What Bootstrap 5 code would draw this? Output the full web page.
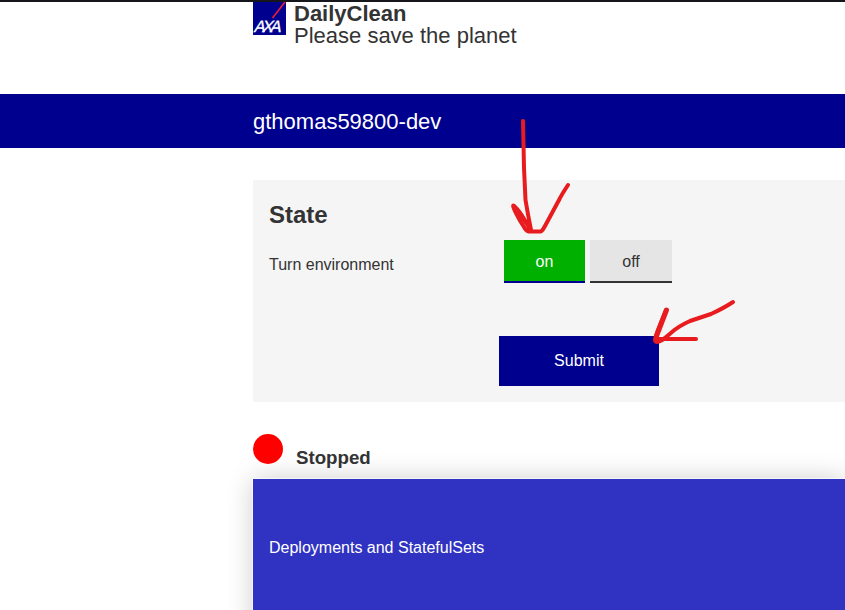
<!DOCTYPE html>
<html lang="en">
<head>
<meta charset="utf-8">
<meta name="viewport" content="width=device-width, initial-scale=1">
<title>DailyClean</title>
<link rel="stylesheet" href="https://cdn.jsdelivr.net/npm/bootstrap@5.3.0/dist/css/bootstrap.min.css">
<style>
body { font-family: "Liberation Sans", Arial, sans-serif; font-size: 16px; color: #333; height: 610px; }
.page-inset { padding-left: 253px; }
.site-header { height: 94px; border-top: 2px solid #15151c; }
.site-title { font-size: 22px; line-height: 22px; padding: 1px 0 0 8px; }
.env-bar { height: 54px; background: #00008f; font-size: 22px; }
.state-panel { height: 222px; margin-top: 32px; background: #f5f5f5; }
.state-title { font-size: 24px; line-height: 28px; padding-top: 5px; margin-bottom: 11px; }
.state-label { width: 235px; padding-top: 13px; }
.toggle-btn { height: 43px; border: 0; border-bottom: 2px solid #333; border-radius: 0; background: #e5e5e5; color: #333; padding: 2px 0 0; width: 82px; }
.toggle-btn.is-on { background: #00b000; border-color: #00008f; color: #fff; width: 81px; }
.toggle-group { gap: 5px; }
.submit-btn { width: 160px; height: 50px; margin: 53px 0 0 230px; background: #00008f; border: 0; border-radius: 0; color: #fff; }
.submit-btn:hover { background: #00006d; color: #fff; }
.status-row { height: 45px; margin-top: 32px; gap: 13px; }
.status-dot { width: 30px; height: 30px; background: red; }
.status-text { font-size: 18.7px; line-height: 22px; padding-top: 13px; }
.deploy-panel { height: 160px; background: #3032c1; box-shadow: 0 0 0 1px rgba(255,255,255,.6), 0 0 25px rgba(0,0,0,.2); padding: 57px 16px; }
.annotations { pointer-events: none; }
</style>
<script defer src="https://cdn.jsdelivr.net/npm/bootstrap@5.3.0/dist/js/bootstrap.bundle.min.js"></script>
</head>
<body class="bg-white position-relative overflow-hidden">
<header class="site-header page-inset d-flex align-items-start">
  <svg width="33" height="33" viewBox="0 0 33 33" role="img" aria-label="AXA">
    <rect width="33" height="33" fill="#00008f"/>
    <path d="M19.500 16 32 0" stroke="#f01c34" stroke-width="1.600"/>
    <text transform="translate(0.500 30) skewX(-14)" x="0" y="0" font-family="Liberation Sans, Arial, sans-serif" font-size="16.500" fill="#fff" stroke="#fff" stroke-width=".3" textLength="27" lengthAdjust="spacing">AXA</text>
  </svg>
  <div class="site-title">
    <div class="fw-bold">DailyClean</div>
    <div>Please save the planet</div>
  </div>
</header>
<div class="env-bar page-inset d-flex align-items-center text-white">gthomas59800-dev</div>
<main class="page-inset">
  <section class="state-panel p-3">
    <h2 class="state-title fw-bold">State</h2>
    <div class="d-flex align-items-start">
      <div class="state-label">Turn environment</div>
      <div class="toggle-group d-flex">
        <button type="button" class="btn toggle-btn is-on">on</button>
        <button type="button" class="btn toggle-btn">off</button>
      </div>
    </div>
    <button type="button" class="btn submit-btn d-block">Submit</button>
  </section>
  <div class="status-row d-flex align-items-start">
    <span class="status-dot rounded-circle"></span>
    <span class="status-text fw-bold">Stopped</span>
  </div>
  <section class="deploy-panel text-white">Deployments and StatefulSets</section>
</main>
<svg class="annotations position-absolute top-0 start-0" width="845" height="610" fill="none" stroke="#e81b1e" stroke-width="4" stroke-linecap="round" stroke-linejoin="round" aria-hidden="true">
  <path d="M523 121 524 168 525.500 200Q528 215 531 230L524 219Q519 210 514 206C512 204 514 209 516 213Q520 221 524 227Q526 231 529 231.500L541 231.500Q543 230 545 226L559 200Q562 194 568 185"/>
  <path d="M514 206 530 228"/>
  <path d="M733 302Q724 308 711 314L690 321Q679 326 672 332C665 338 661 342 657 342C653 342 656 336 658 330L666 310"/>
  <path d="M658 339 696 339"/>
  <path d="M666.500 310 656.500 336V340" stroke-width="5"/>
</svg>
</body>
</html>
